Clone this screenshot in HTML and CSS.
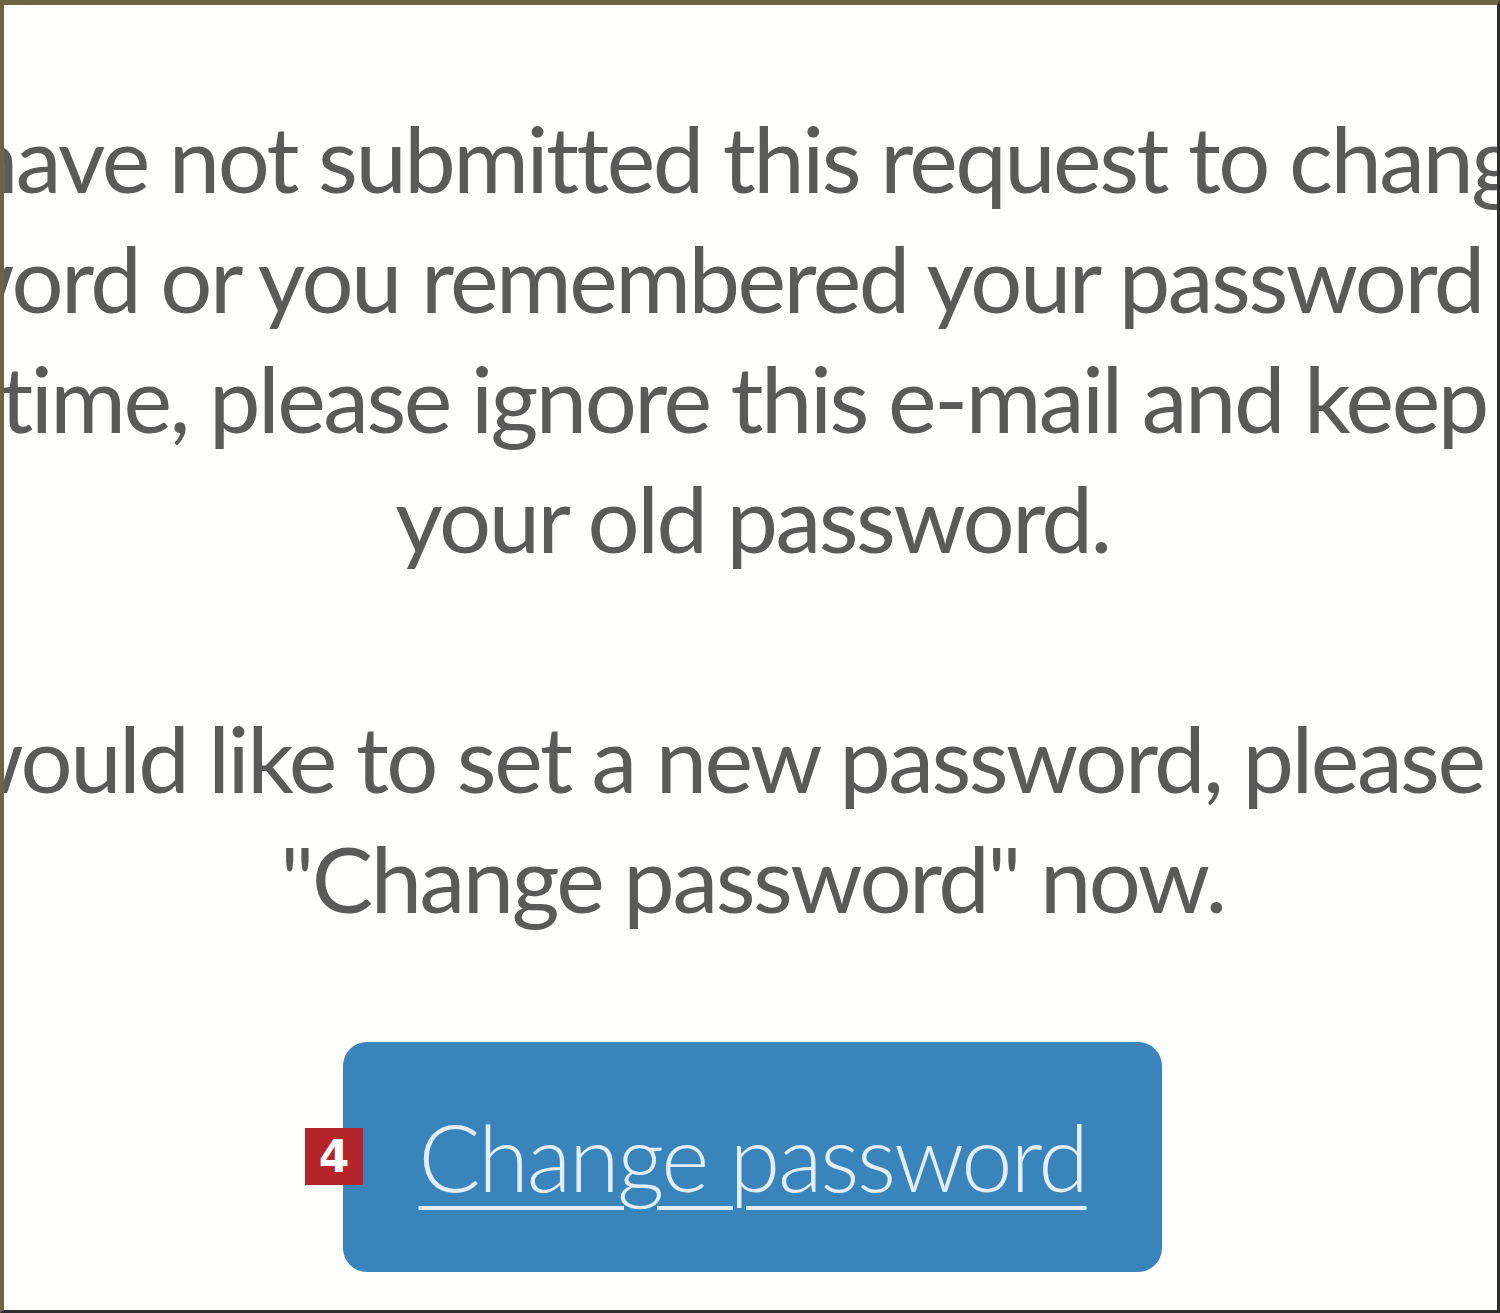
FILE: index.html
```html
<!DOCTYPE html>
<html lang="en">
<head>
<meta charset="utf-8">
<title>Change password</title>
<link rel="stylesheet" href="styles.css">
</head>
<body>
<div class="frame">
  <div class="content">
    <p class="para">
      <span class="line shift-right">have not submitted this request to change</span>
      <span class="line shift-left">word or you remembered your password</span>
      <span class="line shift-left-sm">time, please ignore this e-mail and keep</span>
      <span class="line">your old password.</span>
    </p>
    <p class="para">
      <span class="line shift-left-md">would like to set a new password, please</span>
      <span class="line">"Change password" now.</span>
    </p>
    <div class="btn">
      <span class="badge">4</span>
      <a class="btn-link" href="#">Change password</a>
    </div>
  </div>
</div>
</body>
</html>
```

FILE: styles.css
```css
html, body {
  margin: 0;
  padding: 0;
  background: #fdfdfb;
}
.frame {
  box-sizing: border-box;
  width: 1500px;
  height: 1313px;
  border-top: 5px solid #6b6440;
  border-left: 4px solid #6b6440;
  border-right: 3px solid #2e2e2e;
  border-bottom: 3px solid #2e2e2e;
  overflow: hidden;
  background: #fefefc;
}
.content {
  display: flex;
  flex-direction: column;
  align-items: center;
  padding-top: 93px;
  padding-left: 4px;
  font-family: Lato, "Open Sans", sans-serif;
  color: #5a5a5a;
  font-size: 92px;
  letter-spacing: -2.5px;
  line-height: 120px;
}
.para {
  margin: 0 0 120px 0;
  display: flex;
  flex-direction: column;
  align-items: center;
}
.para:last-of-type {
  margin-bottom: 0;
}
.line {
  white-space: nowrap;
}
.shift-right {
  margin-left: 24px;
}
.shift-left {
  margin-right: 80px;
}
.shift-left-md {
  margin-right: 70px;
}
.shift-left-sm {
  margin-right: 18px;
}
.btn {
  position: relative;
  margin-top: 104px;
  width: 819px;
  height: 230px;
  background: #3a84bc;
  border-radius: 24px;
  display: flex;
  align-items: center;
  justify-content: center;
}
.btn-link {
  color: #e4eef6;
  font-weight: 300;
  letter-spacing: -2.3px;
  text-decoration: underline;
  text-decoration-thickness: 4px;
  text-underline-offset: 14px;
}
.badge {
  position: absolute;
  left: -38px;
  top: 86px;
  width: 58px;
  height: 57px;
  background: #b5242a;
  color: #fff;
  font-family: "DejaVu Sans", sans-serif;
  font-weight: bold;
  font-size: 44px;
  letter-spacing: 0;
  line-height: 57px;
  text-align: center;
}
```
